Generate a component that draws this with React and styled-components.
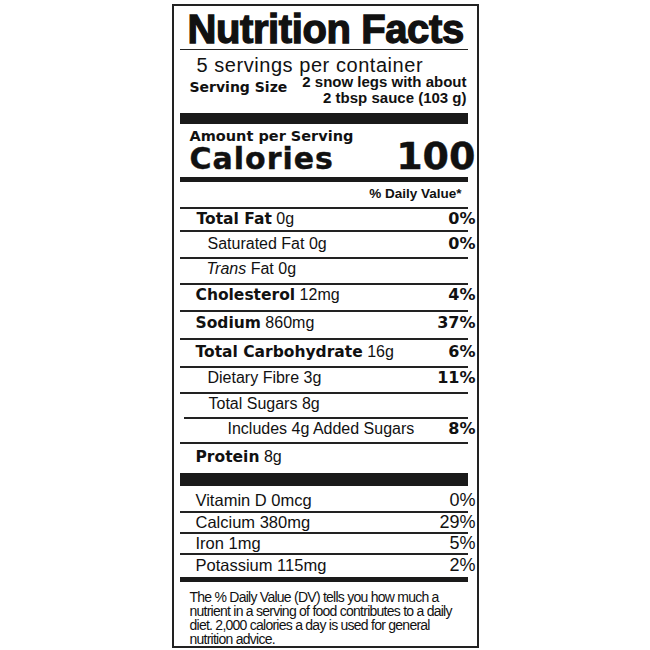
import React from 'react';
import styled, { createGlobalStyle } from 'styled-components';

const Global = createGlobalStyle`
  html, body { margin: 0; padding: 0; background: #fff; }
  body { font-family: "Liberation Sans", Arial, sans-serif; color: #111; }
`;

const HEAVY = '"DejaVu Sans", "Liberation Sans", sans-serif';
const SANS = '"Liberation Sans", Arial, sans-serif';

const Page = styled.div`
  width: 650px;
  height: 650px;
  box-sizing: border-box;
  padding-top: 4px;
  display: flex;
  justify-content: center;
  align-items: flex-start;
`;

const Label = styled.section`
  box-sizing: border-box;
  width: 307px;
  border: 2px solid #222;
  padding: 0 9px 0 6px;
  background: #fff;
  color: #111;
`;

const Title = styled.h1`
  margin: 3px 0 0;
  padding-left: 8px;
  font: 700 40px/40px ${SANS};
  letter-spacing: -0.4px;
  -webkit-text-stroke: 1.3px #111;
  border-bottom: 1.5px solid #222;
  white-space: nowrap;
`;

const Servings = styled.div`
  margin-top: 5.5px;
  padding-left: 17px;
  font: 400 20px/18px ${SANS};
  letter-spacing: 0.55px;
  white-space: nowrap;
`;

const ServingSizeRow = styled.div`
  display: flex;
  justify-content: space-between;
  align-items: flex-start;
`;

const ServingLabel = styled.div`
  margin-top: 5px;
  padding-left: 10px;
  font: 700 14px/16px ${HEAVY};
  white-space: nowrap;
`;

const ServingValue = styled.div`
  padding-right: 1px;
  text-align: right;
  font: 700 15px/16px ${SANS};
  white-space: nowrap;
`;

const Bar = styled.div`
  height: ${p => p.$h}px;
  margin-top: ${p => p.$mt || 0}px;
  background: #1a1a1a;
`;

const Amount = styled.div`
  margin-top: 5px;
  padding-left: 10px;
  font: 700 14.5px/14px ${HEAVY};
  white-space: nowrap;
`;

const CaloriesRow = styled.div`
  display: flex;
  justify-content: space-between;
  align-items: baseline;
`;

const CaloriesText = styled.span`
  padding-left: 10px;
  font: 700 30px/26px ${HEAVY};
  letter-spacing: 1px;
  -webkit-text-stroke: 0.4px #111;
`;

const CaloriesValue = styled.span`
  margin-right: -8px;
  font: 700 38px/26px ${HEAVY};
  -webkit-text-stroke: 0.4px #111;
`;

const DVHeader = styled.div`
  padding: 4px 6px 5px 0;
  text-align: right;
  font: 700 13.5px/16px ${SANS};
  border-bottom: 2px solid #222;
`;

const Row = styled.div`
  display: flex;
  justify-content: space-between;
  align-items: baseline;
  margin-left: ${p => p.$inset || 0}px;
  padding: ${p => p.$pt}px 0 ${p => p.$pb}px ${p => p.$indent}px;
  border-bottom: ${p => (p.$noLine ? 'none' : '2px solid #222')};
  line-height: 20px;
  white-space: nowrap;
`;

const Name = styled.span`
  font: 700 15.5px/20px ${HEAVY};
`;

const Qty = styled.span`
  font: ${p => (p.$italic ? 'italic ' : '')}400 16px/20px ${SANS};
`;

const Pct = styled.span`
  margin-right: -8px;
  font: 700 16px/20px ${HEAVY};
`;

const VitRow = styled.div`
  display: flex;
  justify-content: space-between;
  align-items: baseline;
  padding: ${p => p.$pt}px 0 ${p => p.$pb}px 16px;
  border-bottom: ${p => (p.$noLine ? 'none' : '2px solid #222')};
  white-space: nowrap;
`;

const VitName = styled.span`
  font: 400 16.5px/18px ${SANS};
`;

const VitPct = styled.span`
  margin-right: -8px;
  font: 400 18px/18px ${SANS};
`;

const Footnote = styled.p`
  margin: 0;
  padding: 8px 2px 0 10px;
  font: 400 14px/14px ${SANS};
  letter-spacing: -0.75px;
  white-space: nowrap;
  color: #111;
`;

const nutrients = [
  { name: 'Total Fat', qty: '0g', pct: '0%', indent: 17, pt: 0, pb: 1 },
  { sub: 'Saturated Fat 0g', pct: '0%', indent: 28, pt: 2, pb: 3 },
  { trans: true, indent: 27, pt: 0, pb: 4 },
  { name: 'Cholesterol', qty: '12mg', pct: '4%', indent: 16, pt: 0, pb: 5 },
  { name: 'Sodium', qty: '860mg', pct: '37%', indent: 16, pt: 1, pb: 5 },
  { name: 'Total Carbohydrate', qty: '16g', pct: '6%', indent: 16, pt: 2, pb: 4 },
  { sub: 'Dietary Fibre 3g', pct: '11%', indent: 28, pt: 0, pb: 4 },
  { sub: 'Total Sugars 8g', indent: 25, inset: 4, pt: 0, pb: 3 },
  { sub: 'Includes 4g Added Sugars', pct: '8%', indent: 48, pt: 0, pb: 3 },
];

const vitamins = [
  { name: 'Vitamin D 0mcg', pct: '0%', pt: 5, pb: 2 },
  { name: 'Calcium 380mg', pct: '29%', pt: 0, pb: 1 },
  { name: 'Iron 1mg', pct: '5%', pt: 0, pb: 1 },
  { name: 'Potassium 115mg', pct: '2%', pt: 1, pb: 3, noLine: true },
];

export default function App() {
  return (
    <>
      <Global />
      <Page>
        <Label>
          <Title>Nutrition Facts</Title>
          <Servings>5 servings per container</Servings>
          <ServingSizeRow>
            <ServingLabel>Serving Size</ServingLabel>
            <ServingValue>
              2 snow legs with about
              <br />
              2 tbsp sauce (103 g)
            </ServingValue>
          </ServingSizeRow>
          <Bar $h={11} $mt={7} />
          <Amount>Amount per Serving</Amount>
          <CaloriesRow>
            <CaloriesText>Calories</CaloriesText>
            <CaloriesValue>100</CaloriesValue>
          </CaloriesRow>
          <Bar $h={5} $mt={5} />
          <DVHeader>% Daily Value*</DVHeader>
          {nutrients.map((n, i) => (
            <Row key={i} $indent={n.indent} $inset={n.inset} $pt={n.pt} $pb={n.pb}>
              <span>
                {n.name && (
                  <>
                    <Name>{n.name}</Name> <Qty>{n.qty}</Qty>
                  </>
                )}
                {n.sub && <Qty>{n.sub}</Qty>}
                {n.trans && (
                  <>
                    <Qty $italic>Trans</Qty> <Qty>Fat 0g</Qty>
                  </>
                )}
              </span>
              {n.pct && <Pct>{n.pct}</Pct>}
            </Row>
          ))}
          <Row $indent={16} $pt={3} $pb={6} $noLine>
            <span>
              <Name>Protein</Name> <Qty>8g</Qty>
            </span>
          </Row>
          <Bar $h={13} />
          {vitamins.map((v, i) => (
            <VitRow key={i} $pt={v.pt} $pb={v.pb} $noLine={v.noLine}>
              <VitName>{v.name}</VitName>
              <VitPct>{v.pct}</VitPct>
            </VitRow>
          ))}
          <Bar $h={5} />
          <Footnote>
            The % Daily Value (DV) tells you how much a
            <br />
            nutrient in a serving of food contributes to a daily
            <br />
            diet. 2,000 calories a day is used for general
            <br />
            nutrition advice.
          </Footnote>
        </Label>
      </Page>
    </>
  );
}
